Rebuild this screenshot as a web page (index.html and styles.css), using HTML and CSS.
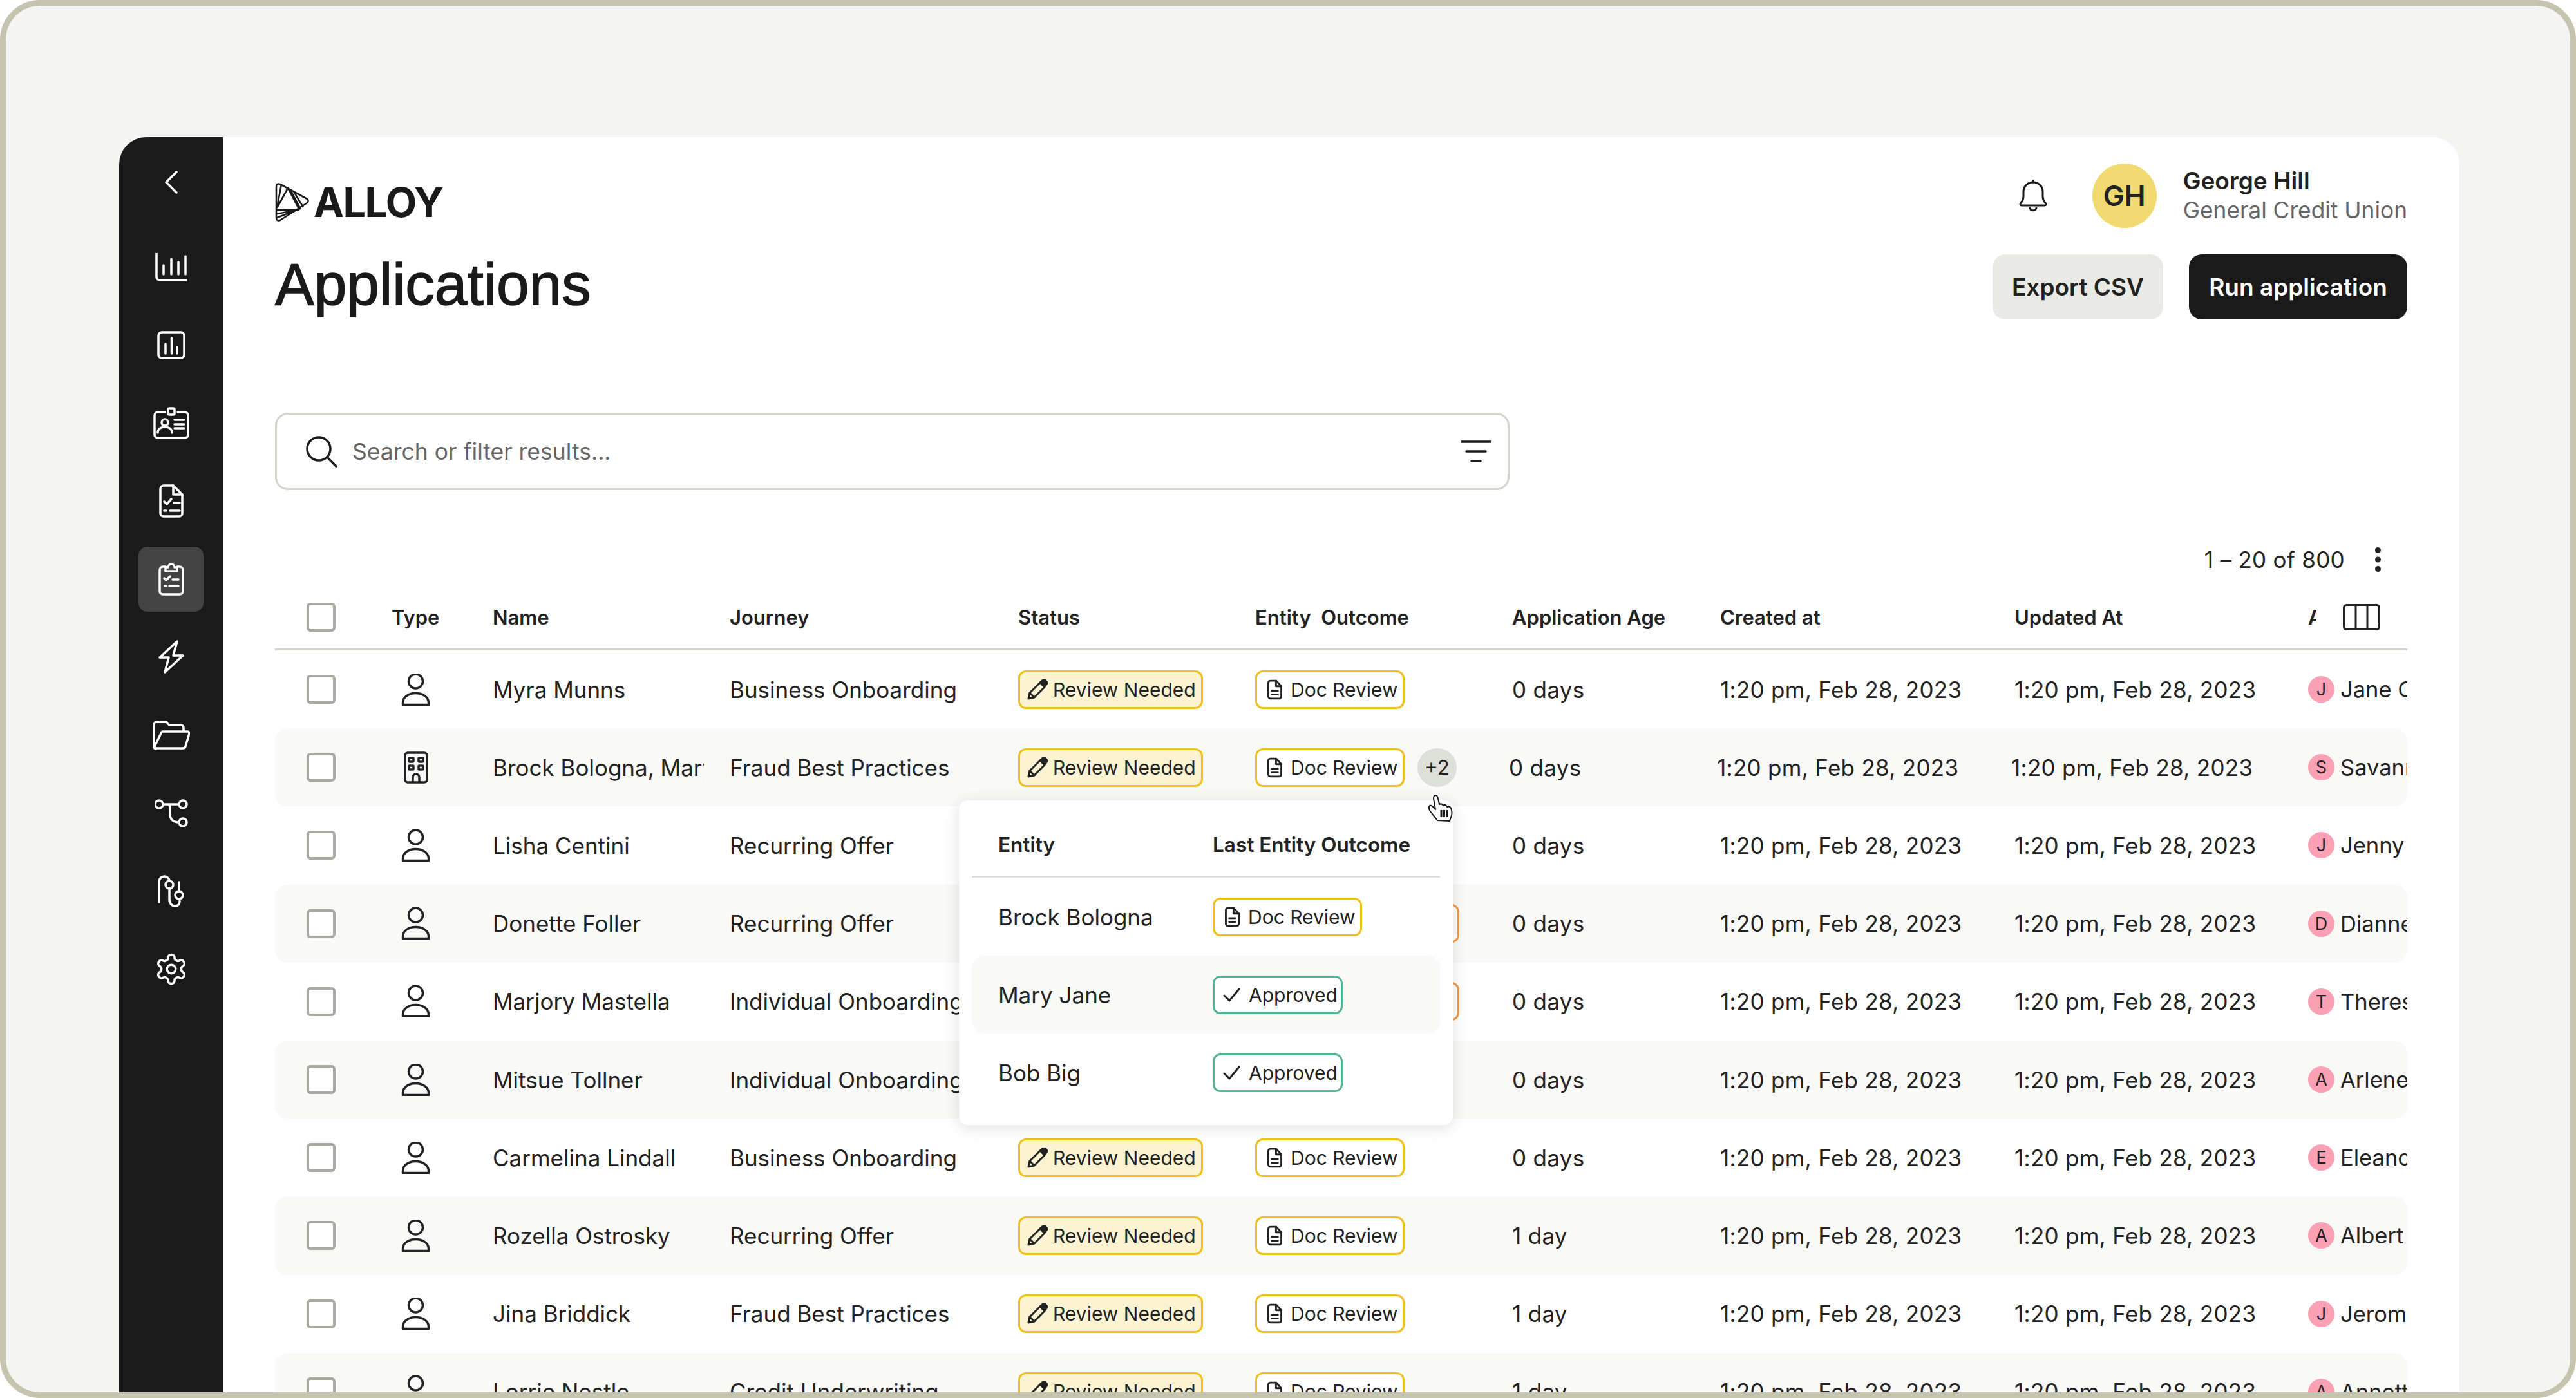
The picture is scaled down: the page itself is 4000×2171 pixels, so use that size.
FILE: index.html
```html
<!DOCTYPE html>
<html lang="en">
<head>
  <meta charset="UTF-8">
  <title>Alloy - Applications</title>
  <link rel="stylesheet" href="styles.css">
</head>
<body>
  <svg class="sprite" xmlns="http://www.w3.org/2000/svg">
    <symbol id="i-person" viewBox="0 0 45 50"><circle cx="22.5" cy="12" r="11"/><path d="M2.5 48.5h40v-3c0-9-9-15-20-15s-20 6-20 15z"/></symbol>
    <symbol id="i-building" viewBox="0 0 38 50"><rect x="2" y="2" width="34" height="46" rx="4"/><rect x="8" y="10" width="7" height="6" rx="1"/><rect x="23" y="10" width="7" height="6" rx="1"/><rect x="8" y="22" width="7" height="6" rx="1"/><rect x="23" y="22" width="7" height="6" rx="1"/><path d="M14 48v-8a5 5 0 0 1 10 0v8"/></symbol>
    <symbol id="i-pencil" viewBox="0 0 32 32"><path d="M2 30l2-9L20 5l7 7-16 16z"/><path d="M4 21l7 7"/><path d="M21 4l3-2.500a3 3 0 0 1 4 0l2 2a3 3 0 0 1 0 4L27 11z" fill="currentColor"/></symbol>
    <symbol id="i-doc" viewBox="0 0 24 32"><path d="M5 1.500h9l8.500 9V27a3.500 3.500 0 0 1-3.500 3.500H5A3.500 3.500 0 0 1 1.500 27V5A3.500 3.500 0 0 1 5 1.500z"/><path d="M14 1.500V10.500h8.500"/><path d="M7 18h10M7 24h10"/></symbol>
    <symbol id="i-check" viewBox="0 0 27 24"><path d="M2 13l8 8L25 3"/></symbol>
  </svg>

  <div class="frame">
    <div class="app">
      <aside class="sidebar">
        <svg class="back" viewBox="0 0 20 36"><path d="M18 2L2 18l16 16"/></svg>
        <nav class="nav">
          <a class="nav-item"><svg width="50" height="44" viewBox="0 0 50 44"><path d="M2 0v37a5 5 0 0 0 5 5h43"/><path d="M13 19v14M25 9v24M36 14v19M47 5v28"/></svg></a>
          <a class="nav-item"><svg width="44" height="44" viewBox="0 0 44 44"><rect x="2" y="2" width="40" height="40" rx="5"/><path d="M13 20v15M22.500 11v24M31 25v10"/></svg></a>
          <a class="nav-item"><svg width="56" height="50" viewBox="0 0 56 50"><path d="M18 8H7a5 5 0 0 0-5 5v30a5 5 0 0 0 5 5h42a5 5 0 0 0 5-5V13a5 5 0 0 0-5-5H38"/><rect x="23" y="2" width="10" height="10" rx="2"/><circle cx="18" cy="24" r="5"/><path d="M7 40c0-6 5-9 11-9s11 3 11 9M33 20h15M33 27h15M33 33h15"/></svg></a>
          <a class="nav-item"><svg width="38" height="52" viewBox="0 0 38 52"><path d="M7 2h15l14 14v29a5 5 0 0 1-5 5H7a5 5 0 0 1-5-5V7a5 5 0 0 1 5-5z"/><path d="M22 2v14h14"/><path d="M8 27l4 4 7-8M23 29h9M8 41h3M17 41h15"/></svg></a>
          <a class="nav-item active"><svg width="40" height="52" viewBox="0 0 40 52"><path d="M11 7H7a5 5 0 0 0-5 5v33a5 5 0 0 0 5 5h26a5 5 0 0 0 5-5V12a5 5 0 0 0-5-5h-4"/><path d="M11 14V8h4a5 5 0 0 1 10 0h4v6z"/><path d="M9 25l3 3 6-6M22 27h9M10 37h2M17 37h14"/></svg></a>
          <a class="nav-item"><svg width="40" height="52" viewBox="0 0 40 52"><path d="M29 2L2 27h14l-6 23 28-26H23z"/></svg></a>
          <a class="nav-item"><svg width="58" height="46" viewBox="0 0 58 46"><path d="M5 44a3 3 0 0 1-3-3V6a4 4 0 0 1 4-4h13c3 0 4 1 5 3l2 2h18a4 4 0 0 1 4 4v5"/><path d="M12 21a3 3 0 0 1 3-3h38c2 0 3 1 3 3l-6 20a4 4 0 0 1-4 3H5a3 3 0 0 1-3-3z" transform="translate(1 -1)"/></svg></a>
          <a class="nav-item"><svg width="52" height="44" viewBox="0 0 52 44"><circle cx="7" cy="8" r="6"/><circle cx="44" cy="8" r="6"/><circle cx="44" cy="36" r="6"/><path d="M13 8h25M20 8c3 0 4 2 4 5v11c0 7 5 12 14 12"/></svg></a>
          <a class="nav-item"><svg width="42" height="50" viewBox="0 0 42 50"><path d="M2 42V11C2 5 6 2 10 2s8 3 8 7"/><circle cx="18" cy="15" r="6"/><path d="M18 21v17c0 6 4 10 9 10s7-3 7-8"/><circle cx="33" cy="31" r="6"/><path d="M33 11v14"/></svg></a>
          <a class="nav-item"><svg class="gear" width="54" height="54" viewBox="0 0 24 24"><path d="M12.220 2h-.440a2 2 0 0 0-2 2v.180a2 2 0 0 1-1 1.730l-.430.250a2 2 0 0 1-2 0l-.150-.080a2 2 0 0 0-2.730.730l-.220.380a2 2 0 0 0 .730 2.730l.150.100a2 2 0 0 1 1 1.720v.510a2 2 0 0 1-1 1.740l-.150.090a2 2 0 0 0-.730 2.730l.220.380a2 2 0 0 0 2.730.730l.150-.080a2 2 0 0 1 2 0l.430.250a2 2 0 0 1 1 1.730V20a2 2 0 0 0 2 2h.440a2 2 0 0 0 2-2v-.180a2 2 0 0 1 1-1.730l.430-.250a2 2 0 0 1 2 0l.150.080a2 2 0 0 0 2.730-.730l.220-.390a2 2 0 0 0-.730-2.730l-.150-.080a2 2 0 0 1-1-1.740v-.500a2 2 0 0 1 1-1.740l.150-.090a2 2 0 0 0 .730-2.730l-.220-.380a2 2 0 0 0-2.730-.730l-.150.080a2 2 0 0 1-2 0l-.430-.250a2 2 0 0 1-1-1.730V4a2 2 0 0 0-2-2z"/><circle cx="12" cy="12" r="3"/></svg></a>
        </nav>
      </aside>

      <main class="main">
        <header class="top">
          <div class="brand">
            <div class="logo">
              <svg width="54" height="62" viewBox="6 7 54 62"><path d="M8 14q0-6 6-4l42 23q3 3 0 6L14 66q-6 2-6-4z"/><path d="M9 47L16 10M9 47L26 16 44 50M30 19l16 30M36 23l14 23M9 50h35M9 56l33-6M9 62l31-12"/></svg>
              <span class="logo-name">ALLOY</span>
            </div>
            <h1 class="title">Applications</h1>
          </div>
          <div class="top-right">
            <div class="user">
              <svg class="bell" width="46" height="50" viewBox="0 0 46 50"><path d="M3 38c0-2 5-4 5-12v-7C8 10 15 4 23 4s15 6 15 15v7c0 8 5 10 5 12 0 1-1 2-2 2H5c-1 0-2-1-2-2z"/><path d="M23 1v3M18 44c1 5 9 5 10 0"/></svg>
              <div class="avatar-lg">GH</div>
              <div class="user-text">
                <div class="user-name">George Hill</div>
                <div class="user-org">General Credit Union</div>
              </div>
            </div>
            <div class="actions">
              <button class="btn btn-light">Export CSV</button>
              <button class="btn btn-dark">Run application</button>
            </div>
          </div>
        </header>

        <div class="search">
          <svg width="50" height="50" viewBox="0 0 50 50"><circle cx="21" cy="21" r="18"/><path d="M34 34l14 14"/></svg>
          <span class="search-text">Search or filter results...</span>
          <svg class="filter" width="46" height="36" viewBox="0 0 46 36"><path d="M0 3h46M8 18h30M16 33h14"/></svg>
        </div>

        <div class="table-wrap">
          <div class="pager">
            <span>1 – 20 of 800</span>
            <svg width="9" height="38" viewBox="0 0 9 38"><circle cx="4.500" cy="4.500" r="4.500"/><circle cx="4.500" cy="19" r="4.500"/><circle cx="4.500" cy="33.500" r="4.500"/></svg>
          </div>

          <div class="row head">
            <div class="cell-check"><span class="checkbox"></span></div>
            <div>Type</div>
            <div>Name</div>
            <div>Journey</div>
            <div>Status</div>
            <div class="pre">Entity  Outcome</div>
            <div>Application Age</div>
            <div>Created at</div>
            <div>Updated At</div>
            <div class="cell-assignee">
              <span class="head-clip">Assignee</span>
              <svg width="58" height="41" viewBox="0 0 58 41"><rect x="1.500" y="1.500" width="55" height="38" rx="4"/><path d="M20 2v37M38 2v37"/></svg>
            </div>
          </div>

          <div class="rows">
            <div class="row">
              <div class="cell-check"><span class="checkbox"></span></div>
              <div><svg class="type-icon"><use href="#i-person"/></svg></div>
              <div class="cell-name">Myra Munns</div>
              <div>Business Onboarding</div>
              <div><span class="badge badge-review"><svg class="ic-pencil"><use href="#i-pencil"/></svg>Review Needed</span></div>
              <div class="cell-entity"><span class="badge badge-doc"><svg class="ic-doc"><use href="#i-doc"/></svg>Doc Review</span></div>
              <div>0 days</div>
              <div>1:20 pm, Feb 28, 2023</div>
              <div>1:20 pm, Feb 28, 2023</div>
              <div class="cell-assignee"><span class="avatar">J</span><span>Jane Cooper</span></div>
            </div>
            <div class="row">
              <div class="cell-check"><span class="checkbox"></span></div>
              <div><svg class="type-icon type-biz"><use href="#i-building"/></svg></div>
              <div class="cell-name">Brock Bologna, Mary Jane, Bob Big</div>
              <div>Fraud Best Practices</div>
              <div><span class="badge badge-review"><svg class="ic-pencil"><use href="#i-pencil"/></svg>Review Needed</span></div>
              <div class="cell-entity"><span class="badge badge-doc"><svg class="ic-doc"><use href="#i-doc"/></svg>Doc Review</span><span class="more">+2</span></div>
              <div class="nudge">0 days</div>
              <div class="nudge">1:20 pm, Feb 28, 2023</div>
              <div class="nudge">1:20 pm, Feb 28, 2023</div>
              <div class="cell-assignee"><span class="avatar">S</span><span>Savannah Nguyen</span></div>
            </div>
            <div class="row">
              <div class="cell-check"><span class="checkbox"></span></div>
              <div><svg class="type-icon"><use href="#i-person"/></svg></div>
              <div class="cell-name">Lisha Centini</div>
              <div>Recurring Offer</div>
              <div><span class="badge badge-review"><svg class="ic-pencil"><use href="#i-pencil"/></svg>Review Needed</span></div>
              <div class="cell-entity"><span class="badge badge-doc"><svg class="ic-doc"><use href="#i-doc"/></svg>Doc Review</span></div>
              <div>0 days</div>
              <div>1:20 pm, Feb 28, 2023</div>
              <div>1:20 pm, Feb 28, 2023</div>
              <div class="cell-assignee"><span class="avatar">J</span><span>Jenny Wilson</span></div>
            </div>
            <div class="row">
              <div class="cell-check"><span class="checkbox"></span></div>
              <div><svg class="type-icon"><use href="#i-person"/></svg></div>
              <div class="cell-name">Donette Foller</div>
              <div>Recurring Offer</div>
              <div><span class="badge badge-review"><svg class="ic-pencil"><use href="#i-pencil"/></svg>Review Needed</span></div>
              <div class="cell-entity"><span class="badge badge-manual"><svg class="ic-doc"><use href="#i-doc"/></svg>Manual Review</span></div>
              <div>0 days</div>
              <div>1:20 pm, Feb 28, 2023</div>
              <div>1:20 pm, Feb 28, 2023</div>
              <div class="cell-assignee"><span class="avatar">D</span><span>Dianne Russell</span></div>
            </div>
            <div class="row">
              <div class="cell-check"><span class="checkbox"></span></div>
              <div><svg class="type-icon"><use href="#i-person"/></svg></div>
              <div class="cell-name">Marjory Mastella</div>
              <div>Individual Onboarding</div>
              <div><span class="badge badge-review"><svg class="ic-pencil"><use href="#i-pencil"/></svg>Review Needed</span></div>
              <div class="cell-entity"><span class="badge badge-manual"><svg class="ic-doc"><use href="#i-doc"/></svg>Manual Review</span></div>
              <div>0 days</div>
              <div>1:20 pm, Feb 28, 2023</div>
              <div>1:20 pm, Feb 28, 2023</div>
              <div class="cell-assignee"><span class="avatar">T</span><span>Theresa Webb</span></div>
            </div>
            <div class="row">
              <div class="cell-check"><span class="checkbox"></span></div>
              <div><svg class="type-icon"><use href="#i-person"/></svg></div>
              <div class="cell-name">Mitsue Tollner</div>
              <div>Individual Onboarding</div>
              <div><span class="badge badge-review"><svg class="ic-pencil"><use href="#i-pencil"/></svg>Review Needed</span></div>
              <div class="cell-entity"><span class="badge badge-doc"><svg class="ic-doc"><use href="#i-doc"/></svg>Doc Review</span></div>
              <div>0 days</div>
              <div>1:20 pm, Feb 28, 2023</div>
              <div>1:20 pm, Feb 28, 2023</div>
              <div class="cell-assignee"><span class="avatar">A</span><span>Arlene McCoy</span></div>
            </div>
            <div class="row">
              <div class="cell-check"><span class="checkbox"></span></div>
              <div><svg class="type-icon"><use href="#i-person"/></svg></div>
              <div class="cell-name">Carmelina Lindall</div>
              <div>Business Onboarding</div>
              <div><span class="badge badge-review"><svg class="ic-pencil"><use href="#i-pencil"/></svg>Review Needed</span></div>
              <div class="cell-entity"><span class="badge badge-doc"><svg class="ic-doc"><use href="#i-doc"/></svg>Doc Review</span></div>
              <div>0 days</div>
              <div>1:20 pm, Feb 28, 2023</div>
              <div>1:20 pm, Feb 28, 2023</div>
              <div class="cell-assignee"><span class="avatar">E</span><span>Eleanor Pena</span></div>
            </div>
            <div class="row">
              <div class="cell-check"><span class="checkbox"></span></div>
              <div><svg class="type-icon"><use href="#i-person"/></svg></div>
              <div class="cell-name">Rozella Ostrosky</div>
              <div>Recurring Offer</div>
              <div><span class="badge badge-review"><svg class="ic-pencil"><use href="#i-pencil"/></svg>Review Needed</span></div>
              <div class="cell-entity"><span class="badge badge-doc"><svg class="ic-doc"><use href="#i-doc"/></svg>Doc Review</span></div>
              <div>1 day</div>
              <div>1:20 pm, Feb 28, 2023</div>
              <div>1:20 pm, Feb 28, 2023</div>
              <div class="cell-assignee"><span class="avatar">A</span><span>Albert Flores</span></div>
            </div>
            <div class="row">
              <div class="cell-check"><span class="checkbox"></span></div>
              <div><svg class="type-icon"><use href="#i-person"/></svg></div>
              <div class="cell-name">Jina Briddick</div>
              <div>Fraud Best Practices</div>
              <div><span class="badge badge-review"><svg class="ic-pencil"><use href="#i-pencil"/></svg>Review Needed</span></div>
              <div class="cell-entity"><span class="badge badge-doc"><svg class="ic-doc"><use href="#i-doc"/></svg>Doc Review</span></div>
              <div>1 day</div>
              <div>1:20 pm, Feb 28, 2023</div>
              <div>1:20 pm, Feb 28, 2023</div>
              <div class="cell-assignee"><span class="avatar">J</span><span>Jerome Bell</span></div>
            </div>
            <div class="row">
              <div class="cell-check"><span class="checkbox"></span></div>
              <div><svg class="type-icon"><use href="#i-person"/></svg></div>
              <div class="cell-name">Lorrie Nestle</div>
              <div>Credit Underwriting</div>
              <div><span class="badge badge-review"><svg class="ic-pencil"><use href="#i-pencil"/></svg>Review Needed</span></div>
              <div class="cell-entity"><span class="badge badge-doc"><svg class="ic-doc"><use href="#i-doc"/></svg>Doc Review</span></div>
              <div>1 day</div>
              <div>1:20 pm, Feb 28, 2023</div>
              <div>1:20 pm, Feb 28, 2023</div>
              <div class="cell-assignee"><span class="avatar">A</span><span>Annette Black</span></div>
            </div>
          </div>

          <div class="popover">
            <div class="pop-row pop-head">
              <div>Entity</div>
              <div>Last Entity Outcome</div>
            </div>
            <div class="pop-row">
              <div>Brock Bologna</div>
              <div><span class="badge badge-doc"><svg class="ic-doc"><use href="#i-doc"/></svg>Doc Review</span></div>
            </div>
            <div class="pop-row pop-alt">
              <div>Mary Jane</div>
              <div><span class="badge badge-ok"><svg class="ic-check"><use href="#i-check"/></svg>Approved</span></div>
            </div>
            <div class="pop-row">
              <div>Bob Big</div>
              <div><span class="badge badge-ok"><svg class="ic-check"><use href="#i-check"/></svg>Approved</span></div>
            </div>
          </div>

          <svg class="hand" width="60" height="60" viewBox="0 0 60 60"><path d="M28 47L17 33q-4-5-1-9 3-1 7 4l2 2-3-17q0-5 3-5t4 5l2 9q4-2 6 2 4-3 6 2 4-2 6 2 3 8 0 14l-2 6z"/><path class="hand-bars" d="M34 31v11M38.500 31v11M43 31v11"/></svg>
        </div>
      </main>
    </div>
  </div>
</body>
</html>
```

FILE: styles.css
```css
* {
  box-sizing: border-box;
}
html, body {
  margin: 0;
  height: 100%;
}
body {
  font-family: Inter, "Liberation Sans", sans-serif;
  font-size: 35px;
  color: #222;
  overflow: hidden;
}
.sprite {
  display: none;
}
.frame {
  height: 2171px;
  padding: 204px 172px 0 176px;
  background-color: #f4f4f2;
  border: 9px solid #c5c4ae;
  border-radius: 62px;
  overflow: hidden;
}
.app {
  display: flex;
  width: 3634px;
  background-color: #fff;
  border-radius: 42px 42px 0 0;
  overflow: hidden;
}

/* sidebar */
.sidebar {
  flex: 0 0 161px;
  display: flex;
  flex-direction: column;
  align-items: center;
  padding-top: 52px;
  background-color: #1a1a1a;
}
.sidebar svg {
  fill: none;
  stroke: #fff;
  stroke-width: 3.5;
  stroke-linecap: round;
  stroke-linejoin: round;
}
.sidebar svg.gear {
  stroke-width: 1.55;
}
.back {
  width: 20px;
  height: 36px;
  flex: none;
}
.nav {
  display: flex;
  flex-direction: column;
  gap: 20.2px;
  margin-top: 63px;
}
.nav-item {
  display: flex;
  align-items: center;
  justify-content: center;
  width: 101px;
  height: 101px;
  border-radius: 14px;
}
.nav-item.active {
  background-color: #434343;
}

/* main */
.main {
  flex: 1;
  min-width: 0;
  padding: 40px 81px 0;
}
.top {
  display: flex;
  justify-content: space-between;
  height: 243px;
}
.brand {
  padding-top: 30px;
}
.logo {
  display: flex;
  align-items: center;
  gap: 6px;
  height: 62px;
}
.logo svg {
  fill: none;
  stroke: #1a1a1a;
  stroke-width: 2.6;
  stroke-linejoin: round;
}
.logo-name {
  font-size: 63px;
  font-weight: 700;
  letter-spacing: -1.6px;
  color: #1a1a1a;
}
.title {
  margin: 47px 0 0;
  font-family: "Liberation Sans", sans-serif;
  font-size: 91px;
  font-weight: 400;
  line-height: 100px;
  color: #1a1a1a;
  -webkit-text-stroke: 1.5px #1a1a1a;
}
.top-right {
  display: flex;
  flex-direction: column;
  align-items: flex-end;
  gap: 41px;
}
.user {
  display: flex;
  align-items: center;
  height: 101px;
}
.bell {
  fill: none;
  stroke: #1a1a1a;
  stroke-width: 3;
  stroke-linecap: round;
  margin-right: 69px;
}
.avatar-lg {
  display: flex;
  align-items: center;
  justify-content: center;
  width: 100px;
  height: 100px;
  border-radius: 50%;
  background-color: #f1da6f;
  font-size: 44px;
  font-weight: 600;
  margin-right: 41px;
}
.user-name {
  font-size: 37px;
  font-weight: 600;
  line-height: 46px;
}
.user-org {
  font-size: 35.3px;
  line-height: 46px;
  color: #666;
}
.actions {
  display: flex;
  gap: 40px;
}
.btn {
  height: 101px;
  border: none;
  border-radius: 20px;
  font-family: inherit;
  font-size: 37px;
  font-weight: 600;
}
.btn-light {
  width: 265px;
  background-color: #e9eae5;
  color: #222;
}
.btn-dark {
  width: 339px;
  background-color: #1a1a1a;
  color: #fff;
}

/* search */
.search {
  display: flex;
  align-items: center;
  width: 1917px;
  height: 120px;
  margin-top: 145px;
  padding: 0 26px 0 44px;
  border: 3px solid #d5d5cb;
  border-radius: 20px;
}
.search svg {
  fill: none;
  stroke: #1a1a1a;
  stroke-width: 3.5;
  stroke-linecap: round;
  flex: none;
}
.search-text {
  flex: 1;
  margin-left: 23px;
  font-size: 35.5px;
  color: #666;
}

/* table */
.table-wrap {
  position: relative;
  margin-top: 78px;
}
.pager {
  display: flex;
  align-items: center;
  justify-content: flex-end;
  gap: 47px;
  height: 60px;
  padding-right: 41px;
  letter-spacing: 0.3px;
}
.pager svg {
  fill: #222;
}
.row {
  display: grid;
  grid-template-columns: 181px 157px 368px 448px 368px 399px 323px 457px 456px 154px;
  align-items: center;
  height: 121.2px;
  border-radius: 20px;
}
.rows .row:nth-child(even) {
  background-color: #f9f9f7;
}
.rows .row > :nth-child(n+7):nth-child(-n+9) {
  letter-spacing: 0.3px;
}
.head {
  height: 98px;
  margin-top: 13px;
  padding-bottom: 2px;
  border-radius: 0;
  border-bottom: 3px solid #d5d5cb;
  font-size: 31px;
  font-weight: 600;
}
.pre {
  white-space: pre;
}
.cell-check {
  display: flex;
  padding-left: 49px;
}
.checkbox {
  width: 45px;
  height: 45px;
  background-color: #fff;
  border: 4px solid #aaa9a0;
  border-radius: 6px;
}
.type-icon {
  display: block;
  width: 45px;
  height: 50px;
  margin-left: 15px;
  fill: none;
  stroke: #222;
  stroke-width: 3.5;
  stroke-linejoin: round;
}
.type-biz {
  width: 38px;
  margin-left: 19px;
}
.cell-name {
  width: 328px;
  overflow: hidden;
  white-space: nowrap;
}
.nudge {
  margin-left: -5px;
}
.cell-entity {
  display: flex;
  align-items: center;
}
.cell-assignee {
  display: flex;
  align-items: center;
  gap: 9px;
  font-size: 34.5px;
  overflow: hidden;
  white-space: nowrap;
}
.head .cell-assignee {
  gap: 41px;
  font-size: 31px;
}
.head-clip {
  flex: none;
  width: 13px;
  overflow: hidden;
}
.cell-assignee svg {
  flex: none;
  fill: none;
  stroke: #222;
  stroke-width: 3;
}
.avatar {
  flex: none;
  display: flex;
  align-items: center;
  justify-content: center;
  width: 41px;
  height: 41px;
  border-radius: 50%;
  background-color: #fba0b5;
  font-size: 27px;
}

/* badges */
.badge {
  display: inline-flex;
  align-items: center;
  height: 60px;
  border: 3px solid #eec21b;
  border-radius: 12px;
  background-color: #fff;
  font-size: 30px;
  white-space: nowrap;
}
.badge svg {
  flex: none;
  fill: none;
  stroke: #222;
  stroke-width: 3;
  stroke-linecap: round;
  stroke-linejoin: round;
}
.badge-review {
  width: 287px;
  padding-left: 11px;
  background-color: #fbf3d1;
  gap: 8px;
}
.badge-doc {
  width: 232px;
  padding-left: 16px;
  gap: 13px;
}
.badge-manual {
  width: 317px;
  padding-left: 16px;
  gap: 13px;
  border-color: #f39a4a;
}
.badge-ok {
  width: 202px;
  padding-left: 13px;
  gap: 13px;
  border-color: #55b394;
}
.ic-pencil {
  width: 32px;
  height: 32px;
}
.ic-doc {
  width: 23px;
  height: 32px;
}
.ic-check {
  width: 27px;
  height: 24px;
}
.more {
  display: flex;
  align-items: center;
  justify-content: center;
  width: 61px;
  height: 60px;
  margin-left: 20px;
  border-radius: 50%;
  background-color: #dddfd9;
  font-size: 31px;
}

/* popover */
.popover {
  position: absolute;
  left: 1062px;
  top: 404px;
  width: 767px;
  height: 504px;
  padding: 0 20px;
  background-color: #fff;
  border-radius: 14px;
  box-shadow: 0 4px 24px rgba(0, 0, 0, 0.12);
}
.pop-row {
  display: grid;
  grid-template-columns: 333px 1fr;
  align-items: center;
  height: 121px;
  padding-left: 41px;
  border-radius: 20px;
}
.pop-head {
  height: 120px;
  padding-top: 20px;
  border-radius: 0;
  border-bottom: 3px solid #dededb;
  font-size: 31.5px;
  font-weight: 600;
}
.pop-alt {
  background-color: #f9f9f7;
}
.hand {
  position: absolute;
  left: 1777px;
  top: 388px;
}
.hand path {
  fill: #fff;
  stroke: #1a1a1a;
  stroke-width: 2;
  stroke-linejoin: round;
}
.hand .hand-bars {
  stroke-width: 3;
}
```
